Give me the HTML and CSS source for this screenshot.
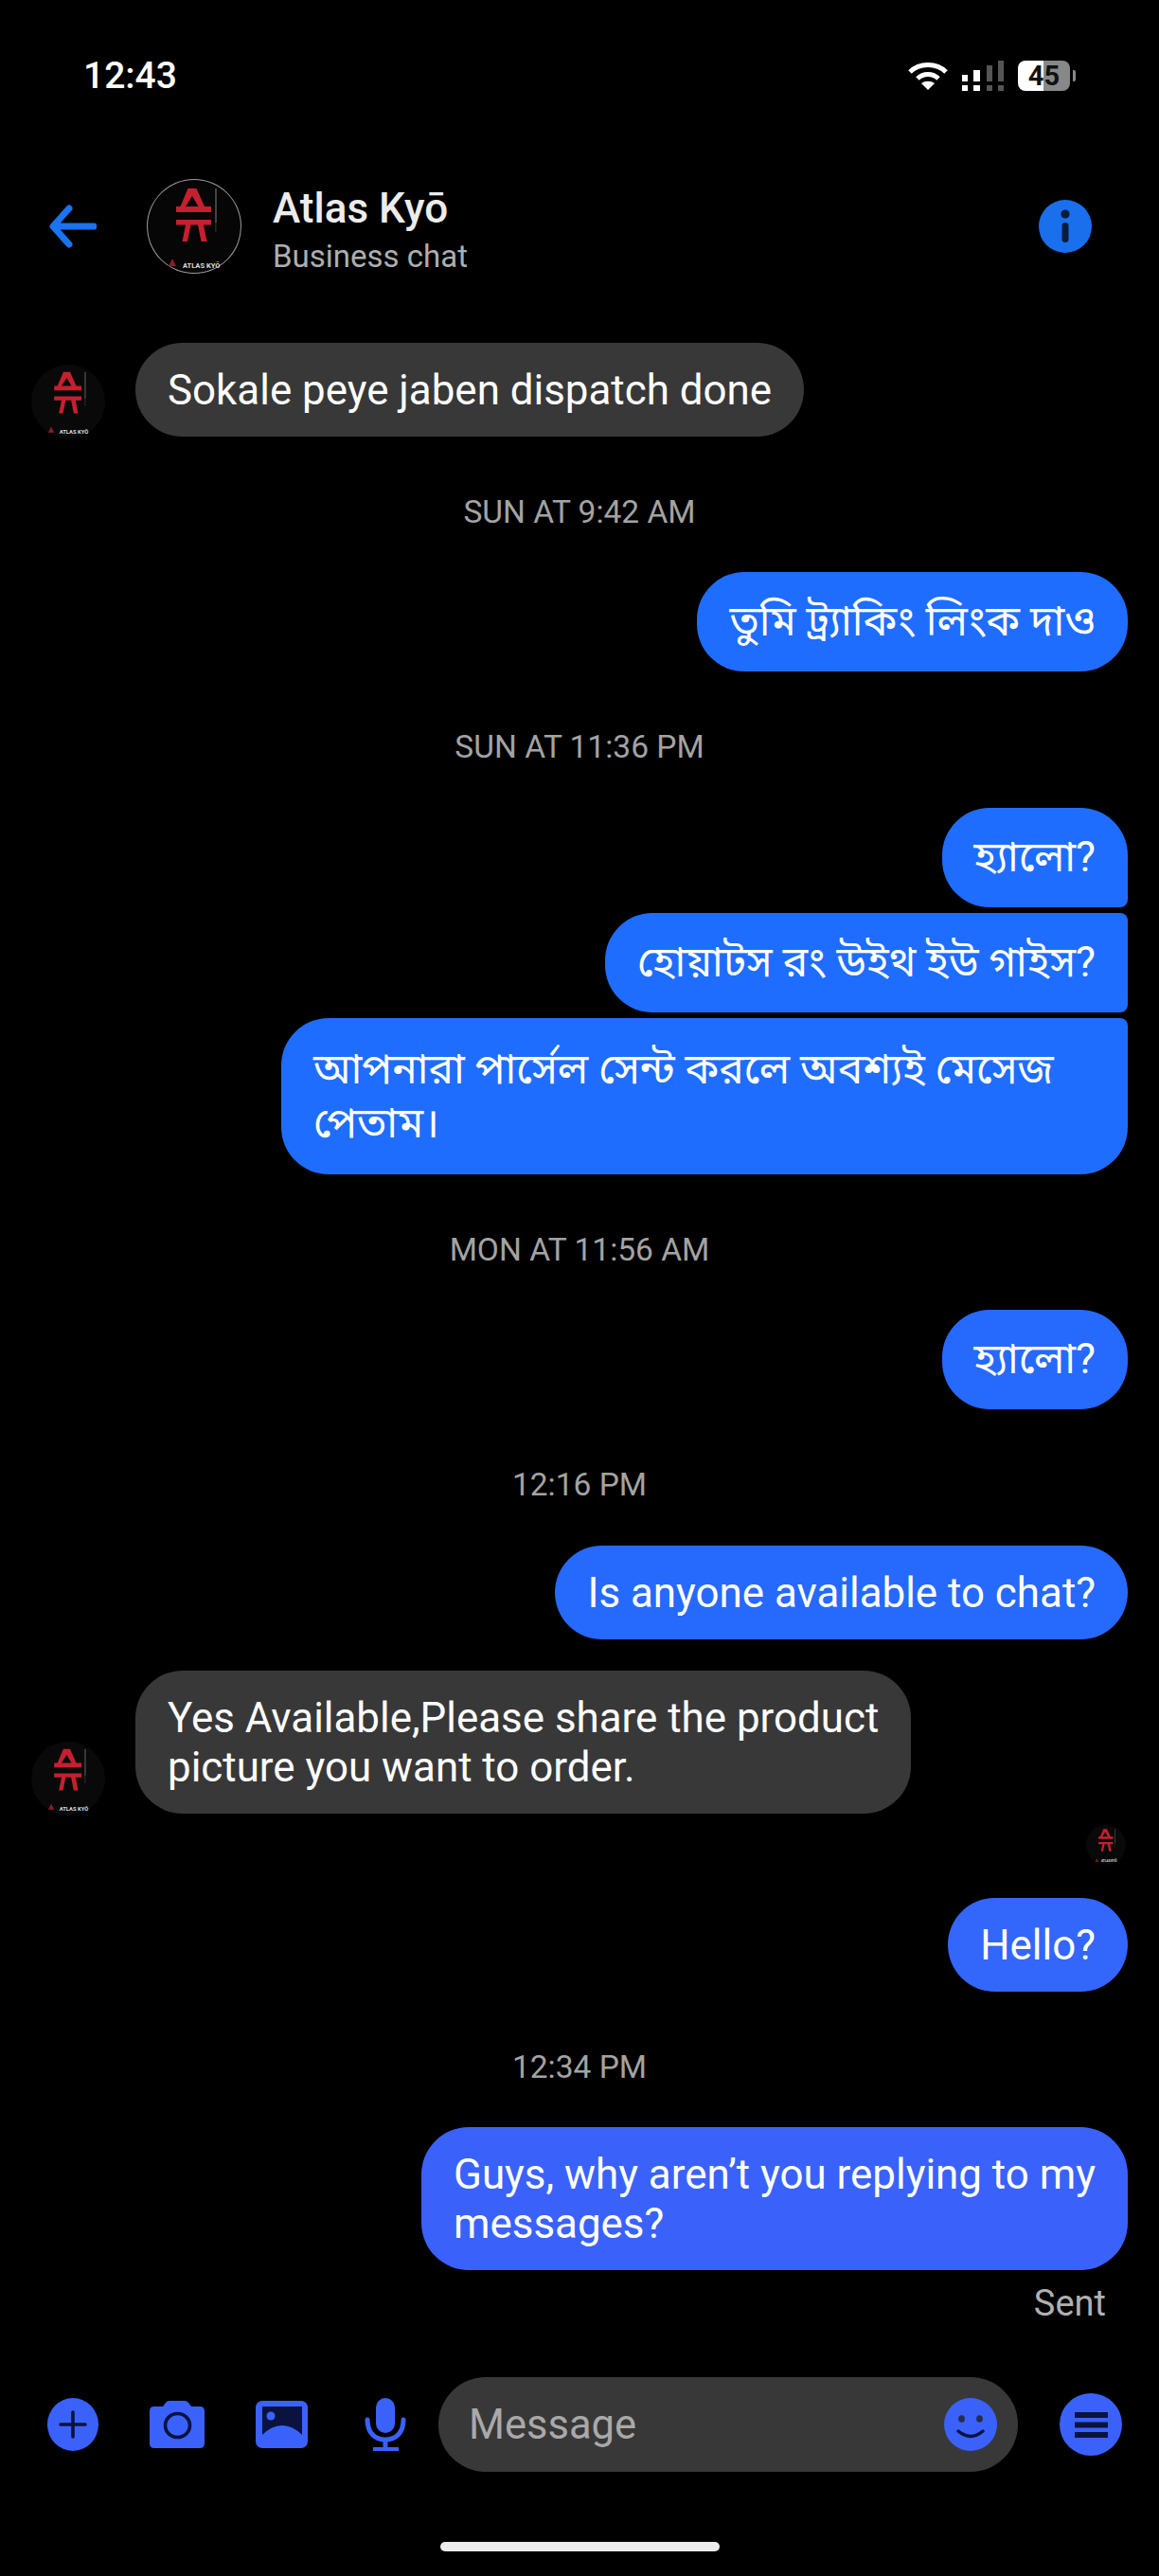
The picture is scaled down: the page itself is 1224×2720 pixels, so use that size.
FILE: index.html
```html
<!DOCTYPE html>
<html lang="bn">
  <head>
    <meta charset="UTF-8" />
    <meta name="viewport" content="width=device-width, initial-scale=1.0" />
    <title>Atlas Kyō</title>
    <link rel="stylesheet" href="styles.css">
  </head>
  <body>
    <svg class="defs" width="0" height="0" aria-hidden="true">
      <symbol id="logo" viewBox="0 0 100 100">
        <path class="logo-red" fill-rule="evenodd" d="M43.5 10 H52.5 L61 29 H68 V35 H31 V29 H35.5 Z M48 18 L41 29 H54.5 Z" />
        <path class="logo-red" d="M31 43 H68 V48.5 H60 L63.5 66 H57.5 L54 48.5 H46.5 L43 66 H37.5 L41 48.5 H31 Z" />
        <rect class="logo-grey" x="72" y="10" width="2" height="36" />
        <rect class="logo-grey" x="72.5" y="46" width="0.8" height="10" />
        <path class="logo-dim" d="M27 84 L31 92 H23 Z" />
      </symbol>
    </svg>

    <div class="screen">
      <!-- status bar -->
      <div class="status">
        <span class="clock">12:43</span>
        <div class="status-icons">
          <svg width="42" height="30" viewBox="0 0 42 30">
            <path class="wifi" d="M2 11 C12 1 30 1 40 11" stroke-width="5" />
            <path class="wifi" d="M10 18 C16 12 26 12 32 18" stroke-width="5" />
            <path d="M21 30 L14 23 C18 20 24 20 28 23 Z" fill="#fff" />
          </svg>
          <svg class="signal" width="46" height="32" viewBox="0 0 46 32">
            <rect x="0" y="15" width="6" height="7" fill="#fff" />
            <rect x="0" y="26" width="6" height="6" fill="#fff" />
            <rect x="12" y="10" width="7" height="12" fill="#fff" />
            <rect x="12" y="26" width="7" height="6" fill="#fff" />
            <rect x="26" y="5" width="6" height="17" fill="#555" />
            <rect x="26" y="26" width="6" height="6" fill="#555" />
            <rect x="38" y="0" width="6" height="22" fill="#555" />
            <rect x="38" y="26" width="6" height="6" fill="#555" />
          </svg>
          <div class="battery">45</div>
          <div class="battery-tip"></div>
        </div>
      </div>

      <!-- chat header -->
      <div class="header">
        <svg class="back" width="50" height="46" viewBox="0 0 50 46">
          <path d="M47 23 H5 M21 4 L4 23 L21 42" />
        </svg>
        <div class="avatar avatar-head">
          <svg width="100" height="100" viewBox="0 0 100 100">
            <use href="#logo" width="100" height="100" />
            <text class="logo-text" x="38" y="94">ATLAS KYŌ</text>
          </svg>
        </div>
        <div class="title">
          <div class="name">Atlas Kyō</div>
          <div class="sub">Business chat</div>
        </div>
        <svg class="info" width="56" height="56" viewBox="0 0 56 56">
          <circle cx="28" cy="28" r="28" fill="#1a6fec" />
          <circle cx="28" cy="15" r="4.6" fill="#0b1c3a" />
          <rect x="24.5" y="24" width="7" height="21" rx="3.5" fill="#0b1c3a" />
        </svg>
      </div>

      <!-- messages -->
      <div class="thread">
        <div class="row in">
          <div class="avatar avatar-small">
            <svg width="78" height="78" viewBox="0 0 100 100">
              <use href="#logo" width="100" height="100" />
              <text class="logo-text" x="38" y="94">ATLAS KYŌ</text>
            </svg>
          </div>
          <div class="bubble grey">Sokale peye jaben dispatch done</div>
        </div>

        <div class="stamp">SUN AT 9:42 AM</div>
        <div class="row out">
          <div class="bubble blue-1 bn">তুমি ট্র্যাকিং লিংক দাও</div>
        </div>

        <div class="stamp">SUN AT 11:36 PM</div>
        <div class="group">
          <div class="row out">
            <div class="bubble blue-1 bn first">হ্যালো?</div>
          </div>
          <div class="row out">
            <div class="bubble blue-1 bn middle">হোয়াটস রং উইথ ইউ গাইস?</div>
          </div>
          <div class="row out">
            <div class="bubble blue-1 bn last wide">আপনারা পার্সেল সেন্ট করলে অবশ্যই মেসেজ পেতাম।</div>
          </div>
        </div>

        <div class="stamp">MON AT 11:56 AM</div>
        <div class="row out">
          <div class="bubble blue-2 bn">হ্যালো?</div>
        </div>

        <div class="stamp">12:16 PM</div>
        <div class="row out">
          <div class="bubble blue-2 anyone">Is anyone available to chat?</div>
        </div>

        <div class="row in reply">
          <div class="avatar avatar-small">
            <svg width="78" height="78" viewBox="0 0 100 100">
              <use href="#logo" width="100" height="100" />
              <text class="logo-text" x="38" y="94">ATLAS KYŌ</text>
            </svg>
          </div>
          <div class="bubble grey yes">Yes Available,Please share the product picture you want to order.</div>
        </div>

        <div class="row out seen">
          <div class="avatar avatar-seen">
            <svg width="42" height="42" viewBox="0 0 100 100">
              <use href="#logo" width="100" height="100" />
              <text class="logo-text" x="38" y="94">ATLAS KYŌ</text>
            </svg>
          </div>
        </div>

        <div class="row out">
          <div class="bubble blue-3">Hello?</div>
        </div>

        <div class="stamp">12:34 PM</div>
        <div class="row out">
          <div class="bubble blue-4 guys">Guys, why aren’t you replying to my messages?</div>
        </div>
        <div class="sent">Sent</div>
      </div>

      <!-- composer -->
      <div class="composer">
        <div class="slot">
          <svg width="54" height="56" viewBox="0 0 54 56">
            <ellipse cx="27" cy="28" rx="27" ry="28" fill="#3a62fb" />
            <path d="M27 15 V41 M14 28 H40" class="cut" stroke-width="3.6" />
          </svg>
        </div>
        <div class="slot">
          <svg width="58" height="50" viewBox="0 0 58 50">
            <path d="M5 6 H14 L17 2 Q18 0 21 0 H37 Q40 0 41 2 L44 6 H53 Q58 6 58 11 V45 Q58 50 53 50 H5 Q0 50 0 45 V11 Q0 6 5 6 Z" fill="#3a62fb" />
            <ellipse cx="29.5" cy="26" rx="13" ry="12.5" fill="none" stroke="#0a1340" stroke-width="3.6" />
          </svg>
        </div>
        <div class="slot">
          <svg width="55" height="50" viewBox="0 0 55 50">
            <rect width="55" height="50" rx="7" fill="#3a62fb" />
            <path d="M7 6 H49 V36 Q39 26 28 26 Q17 26 7 36 Z" fill="#0a1340" />
            <circle cx="16" cy="16" r="4.5" fill="#3a62fb" />
          </svg>
        </div>
        <div class="slot">
          <svg width="44" height="56" viewBox="0 0 44 56">
            <rect x="12" y="0" width="20" height="37" rx="10" fill="#3a62fb" />
            <path d="M3 23 C3 37 11 44 22 44 C33 44 41 37 41 23" fill="none" stroke="#3a62fb" stroke-width="5" stroke-linecap="round" />
            <rect x="19.5" y="44" width="5" height="9" fill="#3a62fb" />
            <rect x="9" y="52" width="27" height="4" fill="#3a62fb" />
          </svg>
        </div>
        <div class="message-box">
          <span class="placeholder">Message</span>
          <svg width="56" height="56" viewBox="0 0 56 56">
            <circle cx="28" cy="28" r="28" fill="#3a62fb" />
            <ellipse cx="18.5" cy="22" rx="3.4" ry="3.8" fill="#262c4a" />
            <ellipse cx="37.5" cy="22" rx="3.4" ry="3.8" fill="#262c4a" />
            <path d="M15 35 Q28 46 41 35" class="cut" stroke-width="3.4" />
          </svg>
        </div>
        <svg class="menu" width="66" height="66" viewBox="0 0 66 66">
          <circle cx="33" cy="33" r="33" fill="#3a62fb" />
          <rect x="16" y="20" width="35" height="6" fill="#0a1340" />
          <rect x="16" y="30.5" width="35" height="6" fill="#0a1340" />
          <rect x="16" y="41" width="35" height="6" fill="#0a1340" />
        </svg>
      </div>

      <div class="home-bar"></div>
    </div>
  </body>
</html>
```

FILE: styles.css
```css
* {
  margin: 0;
  padding: 0;
  box-sizing: border-box;
  font-family: "Roboto", "Noto Sans Bengali", "Noto Sans", "Liberation Sans", sans-serif;
}

body {
  background-color: #000;
  color: #fff;
}

.defs {
  position: absolute;
}

.screen {
  width: 1224px;
  height: 2720px;
  display: flex;
  flex-direction: column;
  overflow: hidden;
}

/* status bar */
.status {
  height: 160px;
  flex-shrink: 0;
  display: flex;
  align-items: center;
  justify-content: space-between;
  padding: 0 88px;
}

.clock {
  font-size: 39px;
  font-weight: 500;
}

.status-icons {
  display: flex;
  align-items: center;
}

.wifi {
  fill: none;
  stroke: #fff;
}

.signal {
  margin-left: 15px;
}

.battery {
  width: 55px;
  height: 32px;
  margin-left: 13px;
  border-radius: 8px;
  background: linear-gradient(90deg, #fff 0, #fff 49%, #888 49%, #888 100%);
  color: #111;
  font-size: 29px;
  font-weight: 700;
  line-height: 32px;
  text-align: center;
}

.battery-tip {
  width: 3px;
  height: 12px;
  margin-left: 3px;
  background: #888;
  border-radius: 0 2px 2px 0;
}

/* header */
.header {
  height: 158px;
  flex-shrink: 0;
  display: flex;
  align-items: center;
  padding: 0 71px 0 52px;
}

.back {
  margin-right: 53px;
}

.back path {
  fill: none;
  stroke: #1a73f0;
  stroke-width: 7;
  stroke-linecap: round;
  stroke-linejoin: round;
}

.avatar {
  flex-shrink: 0;
  border-radius: 50%;
  background: #090909;
}

.avatar svg {
  display: block;
}

.avatar-head {
  width: 100px;
  height: 100px;
  box-shadow: inset 0 0 0 1px #9a9a9a;
  background: #060606;
}

.avatar-small {
  width: 78px;
  height: 78px;
  margin-bottom: -2px;
}

.avatar-seen {
  width: 42px;
  height: 42px;
}

.logo-red {
  fill: #c4202f;
}

.logo-dim {
  fill: #8a1c28;
}

.logo-grey {
  fill: #444;
}

.logo-text {
  fill: #ddd;
  font-size: 7.5px;
  font-weight: 700;
}

.title {
  flex: 1;
  margin-left: 33px;
  padding-top: 8px;
}

.name {
  font-size: 44px;
  font-weight: 500;
  line-height: 52px;
  margin-bottom: 4px;
  color: #ececec;
}

.sub {
  font-size: 33px;
  line-height: 42px;
  color: #aeaeae;
}

/* thread */
.thread {
  flex: 1;
  display: flex;
  flex-direction: column;
  padding: 44px 33px 0 33px;
}

.row {
  display: flex;
}

.row.out {
  justify-content: flex-end;
}

.row.in {
  align-items: flex-end;
  gap: 32px;
}

.row.reply {
  margin-top: 33px;
}

.row.seen {
  margin: 12px 2px 35px 0;
}

.bubble {
  padding: 23.5px 34px;
  border-radius: 50px;
  font-size: 43.9px;
  line-height: 52px;
}

.bubble.bn {
  padding: 24px 34px;
  font-size: 44.3px;
  line-height: 57px;
}

.bubble.wide {
  width: 894px;
  padding-top: 25.5px;
  padding-bottom: 25.5px;
}

.grey {
  background: #383838;
}

.blue-1 {
  background: #1f6dfe;
}

.blue-2 {
  background: #2669fd;
}

.blue-3 {
  background: #3366fb;
}

.blue-4 {
  background: #3a62fb;
}

.yes {
  width: 819px;
  padding-right: 20px;
}

.guys {
  width: 746px;
  padding-right: 16px;
}

.anyone {
  margin-top: 1px;
}

.group {
  display: flex;
  flex-direction: column;
  gap: 6px;
  margin-top: 1px;
}

.first {
  border-bottom-right-radius: 8px;
}

.middle {
  border-top-right-radius: 8px;
  border-bottom-right-radius: 8px;
}

.last {
  border-top-right-radius: 8px;
}

.stamp {
  height: 40px;
  margin: 59.5px 0 43.5px;
  color: #a3a3a3;
  font-size: 33.5px;
  line-height: 40px;
  text-align: center;
}

.sent {
  margin: 12px 23px 0 0;
  color: #b0b0b0;
  font-size: 38px;
  line-height: 46px;
  text-align: right;
}

/* composer */
.composer {
  height: 100px;
  flex-shrink: 0;
  display: flex;
  align-items: center;
  padding-left: 22px;
}

.slot {
  width: 110px;
  display: flex;
  justify-content: center;
}

.cut {
  fill: none;
  stroke: #0a1340;
  stroke-linecap: round;
}

.message-box {
  width: 612px;
  height: 100px;
  margin-left: 1px;
  padding: 0 22px 0 32px;
  display: flex;
  align-items: center;
  justify-content: space-between;
  background: #383838;
  border-radius: 50px;
}

.placeholder {
  font-size: 43.5px;
  color: #a9a9a9;
}

.menu {
  margin-left: 44px;
}

.home-bar {
  width: 295px;
  height: 10px;
  flex-shrink: 0;
  margin: 74px auto 26px;
  background: #ececec;
  border-radius: 5px;
}
```
